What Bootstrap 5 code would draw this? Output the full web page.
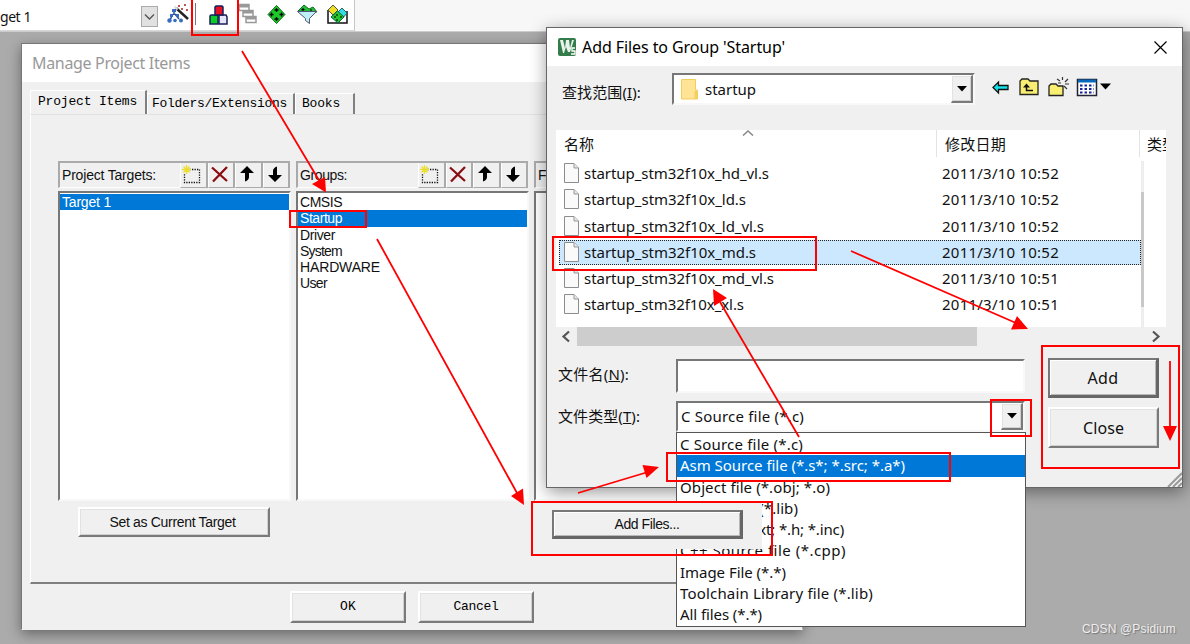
<!DOCTYPE html>
<html lang="zh-CN">
<head>
<meta charset="utf-8">
<title>Manage Project Items</title>
<link href="https://cdn.jsdelivr.net/npm/bootstrap@5.3.0/dist/css/bootstrap.min.css" rel="stylesheet">
<style>
body{width:1190px;height:644px;background:#ababab;overflow:hidden;color:#111;font-family:"Noto Sans","Noto Sans CJK SC",sans-serif;font-size:15px;line-height:20px}
svg{display:block;flex:none}
.strip{height:32px;background:#f7f7f7;border-bottom:1px solid #ccc}
.strip-main{width:355px;height:31px;background:#fff;border-right:1px solid #c8c8c8;border-bottom:1px solid #d8d8d8}
.win{position:absolute;background:#f0f0f0;border:1px solid #666}
.win-manage{left:21px;top:43px;width:782px;height:587px;border-color:#777 #aaa #f0f0f0 #777;box-shadow:0 4px 12px rgba(0,0,0,.4)}
.win-add{left:546px;top:27px;width:637px;height:461px;box-shadow:1px 4px 16px rgba(0,0,0,.42)}
.titlebar{height:38px;background:#fff}
.fit{white-space:nowrap;display:inline-block}
.mono{font-family:"Liberation Mono",monospace;font-size:13px;color:#000}
.gdi{font-family:"Liberation Sans",sans-serif;font-size:14px;line-height:16px}
.tabs-row{height:24px;padding-left:8px;margin-top:8px}
.tabx{border-top:1px solid #fff;border-left:1px solid #fff;border-right:2px solid #808080;height:21px;line-height:20px}
.tabx.on{height:24px;line-height:22px}
.sheet{margin:0 8px;height:470px;border-left:1px solid #fff;border-top:1px solid #e2e2e2;border-right:2px solid #808080;border-bottom:2px solid #808080;padding:46px 0 0 27px}
.pane{width:233px;flex:none}
.pane-head{height:27px;width:232px;border-top:2px solid #aaa;border-left:2px solid #aaa;border-bottom:1px solid #fff;padding-left:2px}
.tbtn{width:27.5px;height:25px;border-left:1px solid #fff;border-right:2px solid #aaa;border-bottom:1px solid #aaa;display:flex;align-items:center;justify-content:center;padding-right:2px}
.sunk{background:#fff;border-style:solid;border-width:2px;border-color:#777 #f8f8f8 #f8f8f8 #777}
.pane-list{height:310px;margin-top:3px;padding-top:1px}
.pane-list div{height:16.3px;line-height:16px;padding-left:2px}
.picked{background:#0078d7;color:#fff}
.push{background:#f0f0f0;border-style:solid;border-width:2px;border-color:#fff #7a7a7a #7a7a7a #fff;display:flex;align-items:center;justify-content:center;box-shadow:inset 1px 1px #e2e2e2,inset -1px -1px #d0d0d0}
.push.main{border-width:2px 3px 3px 2px;border-color:#777 #666 #666 #777;box-shadow:inset 1px 1px #fff,inset -1px -1px #b8b8b8}
.b-set{width:192px;height:30px;margin:6px 0 0 20px;padding-right:3px}
.b-ok{width:116px;height:32px}
.row-look{height:64px;padding:7px 0 0 15px}
.lookbox{width:303px;height:32px}
.drop{width:22px;height:100%;margin-left:auto;border-width:1px 2px 2px 1px}
.files{margin-left:9px;width:610px;height:197px;background:#fff}
.fhead{height:27px;line-height:28px;width:610px;overflow:hidden}
.c1{width:381px;padding-left:8px;border-right:1px solid #e3e3e3}
.c2{width:203px;padding-left:8px;border-right:1px solid #e3e3e3}
.fbody{height:170px;padding:4px 0 0 3px}
.frow{height:26.3px;width:582px}
.frow>.hl{height:24px;width:100%;border:1px dotted transparent;display:flex;align-items:center}
.frow.sel>.hl{background:#cce8ff;border-color:#222;height:25px}
.fname{width:374px}
.vtrack{width:3px;height:168px;background:#eee;padding-top:31px}
.vtrack i{display:block;height:115px;background:#c8c8c8}
.hbar{height:19px;margin-left:9px;width:610px}
.hthumb{width:400px;height:19px;background:#cdcdcd}
.menu{position:absolute;left:129px;top:404px;width:350px;height:195px;background:#fff;border:1px solid #555;padding-top:1px}
.menu div{height:21.3px;line-height:20px;padding-left:3px}
.patch{position:absolute;left:533px;top:503px;width:229px;height:46px;background:#f0f0f0;padding:7px 0 0 19px}
.marks{position:absolute;left:0;top:0;pointer-events:none}
.wm{position:absolute;left:1082px;top:619px;font-size:12px;color:#eee;text-shadow:1px 1px 1px #777;font-family:"Liberation Sans",sans-serif}
.grip{position:absolute;right:0;bottom:0}
</style>
</head>
<body class="position-relative">
<svg width="0" height="0" class="position-absolute"><defs>
<g id="i-new"><path d="M5 4.5h12.5v13H2.500v-9" fill="none" stroke="#111" stroke-width="1.3" stroke-dasharray="1.3 1.2"/><path d="M4.500 0v9M0 4.500h9M1.500 1.500l6 6M7.500 1.500l-6 6" stroke="#e9df2c" stroke-width="1.3"/></g>
<g id="i-del"><path d="M1 1.500L16 15M16 1L2 15.500" stroke="#8a0d12" stroke-width="2.300" fill="none"/></g>
<g id="i-up"><path d="M8 0L15 7H10V11Q10 14 6 15.500V7H1z" fill="#000"/></g>
<g id="i-dn"><path d="M8 16L1 9H6V5Q6 2 10 .5V9H15z" fill="#000"/></g>
<g id="i-file"><path d="M.5.500H10L14.500 5V19.500H.5z" fill="#fafafa" stroke="#8c8c8c"/><path d="M10 .5V5H14.500" fill="#e6e6e6" stroke="#999"/></g>
<g id="i-tri"><path d="M0 0H10L5 5.500z" fill="#000"/></g>
</defs></svg>

<div class="strip"><div class="strip-main d-flex">
 <span class="fit" data-w="31" style="margin-top:7px;font-size:14px">get 1</span>
 <svg width="213" height="31" class="ms-auto" viewBox="141 0 213 31">
  <rect x="141.500" y="6.500" width="16" height="20" fill="#e1e1e1" stroke="#aaa"/><path d="M145 14.500l4.500 4.500 4.500-4.500" fill="none" stroke="#555" stroke-width="1.400"/>
  <g><path d="M174 12v3M173 14l-3 6M175 14l4 5" stroke="#26508f" stroke-width="1.500" fill="none"/><g fill="#386cc0"><rect x="172" y="9" width="4" height="3"/><rect x="170" y="14" width="3" height="3"/><rect x="176" y="14" width="3" height="3"/><circle cx="169.500" cy="20.500" r="2.200"/><circle cx="175" cy="20.500" r="1.800"/><circle cx="181" cy="20.500" r="2"/></g><path d="M176 8l12 11" stroke="#222" stroke-width="2.400"/><path d="M174.500 6.500l3 3" stroke="#ddd" stroke-width="2"/><path d="M178 6h2M184 5h2M181 9h2M186 10h2" stroke="#b55" stroke-width="2"/></g>
  <path d="M195.500 3v22" stroke="#777"/>
  <g stroke="#18205a" stroke-width="1.500"><path d="M210 16l1-1h7v9h-8z" fill="#0ccc27"/><path d="M219 15h7l1 2v7h-8z" fill="#e5e5f8"/><path d="M215 7l1-1h6l1 1v8h-8z" fill="#e81123"/></g>
  <g fill="#fff" stroke="#999" stroke-width="1.500"><path d="M239 4.500h10v6h-10zM243 10.500h10v6h-10zM246 16.500h10v6h-10z"/><path d="M239 6h10M243 12h10M246 18h10" stroke-width="3"/></g>
  <path d="M276.500 5.500l8.500 9-8.500 9-8.500-9z" fill="#1cc928" stroke="#087010"/><path d="M276.500 8v4M274.500 10h4M271.500 12.500v4M269.500 14.500h4M281.500 12.500v4M279.500 14.500h4M276.500 17v4M274.500 19h4" stroke="#000" stroke-width="1.300"/>
  <path d="M298 11l6-6 5 4 4-2 4 5z" fill="#23bd36" stroke="#136e22"/><path d="M303 8v3M301.500 9.500h3M311 9v2" stroke="#000"/><path d="M297.500 11.500h19l-7 7v5l-4-3v-2z" fill="#bdf1f7" stroke="#557"/>
  <path d="M328 10v13h19V11" fill="#fff" stroke="#111" stroke-width="1.500"/><path d="M333 5l5 5-5 5-5-5z" fill="#eddf28" stroke="#554"/><path d="M342 8l5 5-5 6-5-6z" fill="#37dce2" stroke="#266"/><path d="M337.500 11l6.500 6-6 6-7-6z" fill="#27c62c" stroke="#064"/><path d="M337 14v2M334 17h2M340 17h2M337 19v2" stroke="#000"/>
 </svg>
</div></div>

<section class="win win-manage">
 <div class="titlebar d-flex align-items-center ps-2"><span class="fit" data-w="158" style="font-size:16px;color:#999;margin-left:2px">Manage Project Items</span></div>
 <div class="tabs-row d-flex align-items-end">
  <div class="tabx on mono" style="width:117px;padding-left:7px"><span class="fit" data-w="99">Project Items</span></div>
  <div class="tabx mono ps-1" style="width:148px"><span class="fit" data-w="135">Folders/Extensions</span></div>
  <div class="tabx mono" style="width:60px;padding-left:6px"><span class="fit" data-w="38">Books</span></div>
 </div>
 <div class="sheet overflow-hidden">
  <div class="d-flex gdi" style="column-gap:5px">
   <div class="pane"><div class="pane-head d-flex align-items-center"><span class="fit me-auto" data-w="94">Project Targets:</span>
     <span class="tbtn"><svg width="20" height="19"><use href="#i-new"/></svg></span><span class="tbtn"><svg width="17" height="17"><use href="#i-del"/></svg></span><span class="tbtn"><svg width="16" height="17"><use href="#i-up"/></svg></span><span class="tbtn"><svg width="16" height="17"><use href="#i-dn"/></svg></span></div>
    <div class="sunk pane-list"><div class="picked"><span class="fit" data-w="49">Target 1</span></div></div></div>
   <div class="pane"><div class="pane-head d-flex align-items-center"><span class="fit me-auto" data-w="47">Groups:</span>
     <span class="tbtn"><svg width="20" height="19"><use href="#i-new"/></svg></span><span class="tbtn"><svg width="17" height="17"><use href="#i-del"/></svg></span><span class="tbtn"><svg width="16" height="17"><use href="#i-up"/></svg></span><span class="tbtn"><svg width="16" height="17"><use href="#i-dn"/></svg></span></div>
    <div class="sunk pane-list"><div><span class="fit" data-w="42">CMSIS</span></div><div class="picked"><span class="fit" data-w="42">Startup</span></div><div><span class="fit" data-w="35">Driver</span></div><div><span class="fit" data-w="42">System</span></div><div><span class="fit" data-w="80">HARDWARE</span></div><div><span class="fit" data-w="27">User</span></div></div></div>
   <div class="pane"><div class="pane-head d-flex align-items-center"><span>Files:</span></div><div class="sunk pane-list"></div></div>
  </div>
  <div class="push gdi b-set"><span class="fit" data-w="126">Set as Current Target</span></div>
 </div>
 <div class="d-flex" style="padding:7px 0 0 268px;gap:12px"><div class="push mono b-ok"><span class="fit" data-w="16">OK</span></div><div class="push mono b-ok"><span class="fit" data-w="45">Cancel</span></div></div>
</section>

<section class="win win-add">
 <div class="titlebar d-flex align-items-center" style="padding:0 15px 0 11px">
  <svg width="18" height="18"><rect width="18" height="18" rx="2" fill="#347d4a"/><path d="M2 2h3l2 8 1-8h3l1 8 2-8h2l-4 12h-2l-2-5-2 6H5z" fill="#e8f3eb"/><path d="M17 10h-3v3h3v3h-4" stroke="#fff" stroke-width="1.300" fill="none"/></svg>
  <span class="fit me-auto" data-w="203" style="font-size:16px;color:#000;margin-left:6px">Add Files to Group 'Startup'</span>
  <svg width="13" height="13"><path d="M.5.500l12 12M12.500.500l-12 12" stroke="#000" stroke-width="1.200"/></svg>
 </div>
 <div class="row-look d-flex">
  <span class="fit" data-w="79" style="margin-top:9px">查找范围(<u>I</u>):</span>
  <div class="lookbox sunk d-flex" style="margin-left:31px">
   <svg width="18" height="21" style="margin:4px 0 0 7px"><path d="M.5.500h14v10.500h2v9H.5z" fill="#ffe496" stroke="#f1cd5c"/><path d="M13.500 12h3v8h-3z" fill="#f5cf62"/></svg>
   <span class="fit" data-w="51" style="margin:4px 0 0 6px">startup</span>
   <div class="push drop"><svg width="10" height="6"><use href="#i-tri"/></svg></div>
  </div>
  <svg width="120" height="24" viewBox="992 75 120 24" style="margin:2px 0 0 17px">
   <path d="M993 87.500l5.500-5.500v3.500h9.500v4h-9.500v3.500z" fill="#14e2e8" stroke="#111" stroke-width="1.300"/>
   <path d="M1020 81l2-2h6l2 2h8v13.500h-18z" fill="#f8ef72" stroke="#222" stroke-width="1.300"/><path d="M1033 90.500h-6.500V85" stroke="#111" stroke-width="1.500" fill="none"/><path d="M1023 87.500l3.500-4 3.500 4z" fill="#111"/>
   <path d="M1049 86l2-2h5l2 2h5v9.500h-14z" fill="#f8ef72" stroke="#222" stroke-width="1.300"/><path d="M1062.500 77v3M1057 79l3 2M1068 79l-3 3M1065 84h4M1064 86l3 3M1058 83h3" stroke="#333" stroke-width="1.200"/>
   <path d="M1077.500 79.500h19v16h-19z" fill="#fff" stroke="#223" stroke-width="1.500"/><path d="M1078 81h18" stroke="#0868bc" stroke-width="3"/><path d="M1080 85.500h14M1080 89h14M1080 92.500h14" stroke="#16239b" stroke-width="2" stroke-dasharray="2.500 2"/><path d="M1100 83.500h11l-5.500 6z" fill="#000"/>
  </svg>
 </div>
 <div class="files">
  <div class="fhead d-flex position-relative"><div class="c1"><span class="fit" data-w="30">名称</span></div><div class="c2"><span class="fit" data-w="61">修改日期</span></div><div class="overflow-hidden text-nowrap" style="width:26px;padding-left:7px">类型</div>
   <svg width="12" height="6" class="position-absolute" style="left:186px;top:0"><path d="M1 5.500l5-4.500 5 4.500" fill="none" stroke="#888" stroke-width="1.500"/></svg></div>
  <div class="fbody d-flex">
   <div id="rows"></div>
   <div class="vtrack"><i></i></div>
  </div>
 </div>
 <div class="hbar d-flex align-items-center"><svg width="21" height="13"><path d="M13 1.500L7.500 6.500 13 11.500" fill="none" stroke="#555" stroke-width="2.200"/></svg><div class="hthumb"></div><svg width="20" height="13" class="ms-auto"><path d="M7 1.500l5.500 5L7 11.500" fill="none" stroke="#555" stroke-width="2.200"/></svg></div>
 <div class="d-flex" style="padding:11px 0 0 11px">
  <div style="width:118px"><div style="padding-top:7px"><span class="fit" data-w="71">文件名(<u>N</u>):</span></div><div style="padding-top:22px"><span class="fit" data-w="82">文件类型(<u>T</u>):</span></div></div>
  <div style="width:349px;padding-top:2px"><div class="sunk" style="height:34px"></div>
   <div class="sunk d-flex" style="height:31px;margin-top:8px"><span class="fit" data-w="123" style="margin:3px 0 0 3px">C Source file (*.c)</span><div class="push drop"><svg width="10" height="6"><use href="#i-tri"/></svg></div></div></div>
  <div style="margin-left:23px;width:111px;padding-top:1px"><div class="push main" style="height:40px"><span class="fit" data-w="31" style="font-size:16px">Add</span></div><div class="push" style="height:41px;margin-top:9px"><span class="fit" data-w="41" style="font-size:16px">Close</span></div></div>
 </div>
 <svg class="grip" width="15" height="15"><path d="M1 15L15 1M6 15L15 6M11 15L15 11" stroke="#999" stroke-width="2"/></svg>
 <div class="menu" id="types"></div>
</section>

<div class="patch"><div class="push main gdi" style="width:191px;height:29px"><span class="fit" data-w="65">Add Files...</span></div></div>

<svg class="marks" width="1190" height="644">
 <g fill="none" stroke="#f00" stroke-width="2"><path d="M192 -2h46v37h-46z"/><path d="M290 211h76v16h-76z"/><path d="M553 237h263v33H553z"/><path d="M667 453h283v28H667z"/><path d="M991 400h40v36h-40z"/><path d="M1042 346h137v122h-137z"/><path d="M532 502h240v53H532z"/>
 <path d="M242 51L320 182M377 239L517 493M578 493L648 472M799 437L720 302M851 251L1016 323M1170 361v68" stroke-width="1.800"/></g>
 <g fill="#f00"><path d="M326 192.500L312 184 325 177zM524 505L511 496 523 488.500zM659 467L642.500 465 646.500 478zM713 289L714 306 727 298zM1028 329L1011 329.500 1017 316zM1170 441L1163 426h14z"/></g>
</svg>
<div class="wm"><span class="fit" data-w="94">CDSN @Psidium</span></div>

<script src="https://cdn.jsdelivr.net/npm/bootstrap@5.3.0/dist/js/bootstrap.bundle.min.js"></script>
<script>
const files=[["hd_vl",185,"52"],["ld",162,"52"],["ld_vl",180,"52"],["md",172,"52"],["md_vl",190,"51"],["xl",160,"51"]];
document.getElementById("rows").innerHTML=files.map((f,i)=>`<div class="frow ${i===3?"sel":""}"><div class="hl"><div class="fname d-flex align-items-center"><svg width="15" height="20" style="margin-left:4px"><use href="#i-file"/></svg><span class="fit" data-w="${f[1]}" style="margin-left:5px">startup_stm32f10x_${f[0]}.s</span></div><span class="fit" data-w="117" style="margin-left:8px">2011/3/10 10:${f[2]}</span></div></div>`).join("");
const types=[["C Source file (*.c)",123],["Asm Source file (*.s*; *.src; *.a*)",225],["Object file (*.obj; *.o)",150],["Library file (*.lib)",118],["Text file (*.txt; *.h; *.inc)",164],["C++ Source file (*.cpp)",166],["Image File (*.*)",106],["Toolchain Library file (*.lib)",193],["All files (*.*)",82]];
document.getElementById("types").innerHTML=types.map((t,i)=>`<div class="${i===1?"picked":""}"><span class="fit" data-w="${t[1]}">${t[0]}</span></div>`).join("");
document.querySelectorAll("[data-w]").forEach(e=>{const w=e.getBoundingClientRect().width;e.style.letterSpacing=((+e.dataset.w-w)/e.textContent.length)+"px"});
</script>
</body>
</html>
